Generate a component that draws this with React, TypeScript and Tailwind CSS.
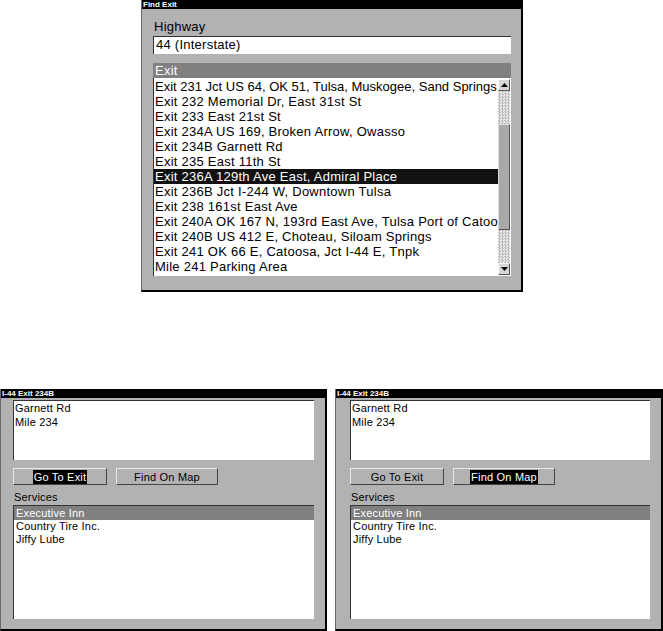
import React from "react";

const FONT = { fontFamily: '"Liberation Sans", Arial, sans-serif' };

const exits = [
  "Exit 231 Jct US 64, OK 51, Tulsa, Muskogee, Sand Springs,",
  "Exit 232 Memorial Dr, East 31st St",
  "Exit 233 East 21st St",
  "Exit 234A US 169, Broken Arrow, Owasso",
  "Exit 234B Garnett Rd",
  "Exit 235 East 11th St",
  "Exit 236A 129th Ave East, Admiral Place",
  "Exit 236B Jct I-244 W, Downtown Tulsa",
  "Exit 238 161st East Ave",
  "Exit 240A OK 167 N, 193rd East Ave, Tulsa Port of Catoosa",
  "Exit 240B US 412 E, Choteau, Siloam Springs",
  "Exit 241 OK 66 E, Catoosa, Jct I-44 E, Tnpk",
  "Mile 241 Parking Area",
];

function Arrow({ up }: { up?: boolean }) {
  return (
    <div className="h-[12px] w-[12px] shrink-0 bg-[#d6d6d6] border border-t-white border-l-white border-r-[#555] border-b-[#555] flex items-center justify-center">
      <svg width="7" height="4" viewBox="0 0 7 4">
        {up ? <polygon points="0,4 7,4 3.5,0" fill="#000" /> : <polygon points="0,0 7,0 3.5,4" fill="#000" />}
      </svg>
    </div>
  );
}

const dots =
  "bg-[#e4e4e4] bg-[repeating-conic-gradient(#bcbcbc_0_25%,#eeeeee_0_50%)] bg-[length:3px_3px]";

function FindExit() {
  return (
    <div className="w-[382px] h-[292px] flex flex-col bg-[#b2b2b2] border-l border-l-[#6a6a6a] border-r-2 border-r-black border-b-2 border-b-black">
      <div className="h-[9px] bg-black text-white text-[8px] font-bold leading-[9px] pl-[1px] shrink-0">Find Exit</div>
      <div className="flex flex-col pl-[11px] pr-[10px] tracking-[0.25px]">
        <div className="pt-[10px] text-[13px] leading-[15px] text-black pl-[1px]">Highway</div>
        <div className="mt-[2px] h-[18px] bg-white border-t border-l border-t-[#333] border-l-[#333] text-[13px] leading-[16px] pl-[2px] text-black">
          44 (Interstate)
        </div>
        <div className="mt-[9px] h-[15px] bg-[#808080] text-white text-[13px] leading-[15px] pl-[2px]">Exit</div>
        <div className="h-[198px] bg-white border-l border-l-[#333] flex">
          <div className="flex-1 min-w-0 flex flex-col pt-[1px] overflow-hidden">
            {exits.map((e, i) => (
              <div
                key={i}
                className={
                  "h-[15px] text-[13px] leading-[15px] pl-[1px] whitespace-nowrap overflow-hidden " +
                  (i === 0 ? "tracking-normal " : "") +
                  (i === 6 ? "bg-[#111] text-white" : "text-black")
                }
              >
                {e}
              </div>
            ))}
          </div>
          <div className="w-[13px] shrink-0 flex flex-col pt-[1px] pb-[1px] pr-[1px]">
            <Arrow up />
            <div className={"h-[33px] " + dots}></div>
            <div className="h-[106px] bg-[#a9a9a9] border-r border-b border-r-[#555] border-b-[#555] border-t border-l border-t-[#ddd] border-l-[#ddd]"></div>
            <div className={"flex-1 " + dots}></div>
            <Arrow />
          </div>
        </div>
      </div>
    </div>
  );
}

function Btn({ label, active, w }: { label: string; active?: boolean; w: string }) {
  return (
    <div
      className={
        w +
        " h-[17px] bg-[#b2b2b2] border border-t-[#e6e6e6] border-l-[#e6e6e6] border-r-[#444] border-b-[#444] flex items-center justify-center text-[11px] text-black tracking-[0.2px]"
      }
    >
      <span className={active ? "bg-black text-white px-[1px] leading-[14px]" : "leading-[14px]"}>{label}</span>
    </div>
  );
}

function ExitPanel({ find, pl }: { find?: boolean; pl: string }) {
  return (
    <div className="h-[242px] w-full flex flex-col bg-[#b2b2b2] border-l border-l-[#6a6a6a] border-r-2 border-r-black border-b-2 border-b-black">
      <div className="h-[9px] bg-black text-white text-[8px] font-bold leading-[9px] pl-[1px] shrink-0">I-44 Exit 234B</div>
      <div className={"flex flex-col pr-[11px] tracking-[0.2px] " + pl}>
        <div className="mt-[2px] h-[60px] bg-white border-l border-t border-l-[#333] border-t-[#333] text-[11px] leading-[14px] text-black pl-[1px]">
          <div>Garnett Rd</div>
          <div>Mile 234</div>
        </div>
        <div className="mt-[8px] flex gap-[9px]">
          <Btn label="Go To Exit" active={!find} w="w-[94px]" />
          <Btn label="Find On Map" active={find} w="w-[102px]" />
        </div>
        <div className="mt-[5px] h-[15px] text-[11px] leading-[15px] text-black pl-[1px]">Services</div>
        <div className="h-[114px] bg-white border-l border-t border-l-[#333] border-t-[#333] flex flex-col text-[11px]">
          <div className="h-[14px] leading-[14px] bg-[#808080] text-white pl-[2px]">Executive Inn</div>
          <div className="h-[13px] leading-[13px] text-black pl-[2px]">Country Tire Inc.</div>
          <div className="h-[13px] leading-[13px] text-black pl-[2px]">Jiffy Lube</div>
        </div>
      </div>
    </div>
  );
}

export default function App() {
  return (
    <div className="w-[663px] h-[631px] bg-white overflow-hidden" style={FONT}>
      <div className="pl-[141px]">
        <FindExit />
      </div>
      <div className="mt-[97px] flex gap-[8px]">
        <div className="w-[327px]">
          <ExitPanel pl="pl-[12px]" />
        </div>
        <div className="flex-1">
          <ExitPanel find pl="pl-[14px]" />
        </div>
      </div>
    </div>
  );
}
